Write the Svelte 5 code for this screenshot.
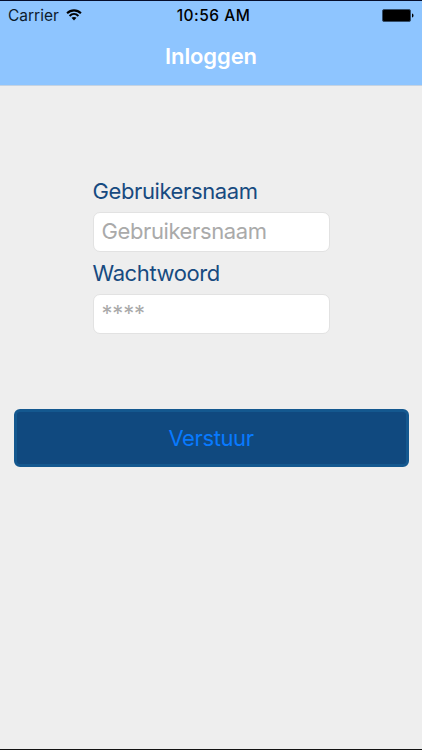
<script lang="ts">
  let username = $state('');
  let password = $state('');

  function submit(e: SubmitEvent) {
    e.preventDefault();
  }
</script>

<div class="screen">
  <header>
    <div class="status">
      <div class="carrier">
        <span>Carrier</span>
        <svg class="wifi" width="16" height="12" viewBox="0 0 17 13" aria-hidden="true">
          <g fill="none" stroke="#000" stroke-width="2.2">
            <path d="M1 4.7C5.3.4 11.7.4 16 4.7" />
            <path d="M3.7 7.5c2.8-2.7 6.8-2.7 9.6 0" />
          </g>
          <path d="M5.8 9.6c1.6-1.4 3.8-1.4 5.4 0L8.5 12.4z" />
        </svg>
      </div>
      <time>10:56 AM</time>
      <svg class="battery" width="32" height="13" viewBox="0 0 32 13" aria-hidden="true">
        <rect x=".5" y=".5" width="28" height="12" rx="1.5" stroke="#344d68" />
        <path d="M30 4.5c2 .5 2 3.500 0 4z" />
      </svg>
    </div>
    <h1>Inloggen</h1>
  </header>

  <form onsubmit={submit}>
    <div class="fields">
      <label for="username">Gebruikersnaam</label>
      <input id="username" type="text" placeholder="Gebruikersnaam" bind:value={username} />
      <label class="pw" for="password">Wachtwoord</label>
      <input id="password" type="password" placeholder="****" bind:value={password} />
    </div>
    <button type="submit"><span>Verstuur</span></button>
  </form>
</div>

<style>
  :global(body) {
    margin: 0;
  }
  .screen {
    box-sizing: border-box;
    height: 750px;
    background: #eee;
    border-top: 1px solid #050e2c;
    border-bottom: 1px solid #111;
    font-family: Inter, 'Liberation Sans', sans-serif;
    overflow: hidden;
  }
  header {
    height: 85px;
    background: #8ec5ff;
    border-bottom: 1px solid #c5d3e2;
    box-sizing: border-box;
  }
  .status {
    display: grid;
    grid-template-columns: 1fr auto 1fr;
    align-items: center;
    height: 27px;
    padding: 0 8px 0 8px;
    color: #000;
    font-size: 15.5px;
    line-height: 27px;
  }
  .carrier {
    display: flex;
    align-items: center;
    gap: 7px;
    color: #0c1b2d;
  }
  .carrier span,
  time {
    padding-top: 2px;
    line-height: 26px;
  }
  time {
    padding-left: 5px;
    font-weight: 550;
    letter-spacing: 0.5px;
  }
  .battery {
    justify-self: end;
  }
  h1 {
    margin: 13px 0 0;
    color: #fff;
    font-size: 22px;
    font-weight: 580;
    letter-spacing: -0.1px;
    line-height: 30px;
    text-align: center;
  }
  form {
    padding: 90px 13px 0;
  }
  .fields {
    width: 237px;
    margin: 0 auto;
  }
  label {
    display: block;
    height: 36px;
    color: #174a80;
    font-size: 22px;
    letter-spacing: -0.4px;
    line-height: 30px;
  }
  .pw {
    margin-top: 6px;
  }
  input {
    display: block;
    box-sizing: border-box;
    width: 237px;
    height: 40px;
    padding: 0 8px 3px;
    border: 1px solid #e2e2e2;
    border-radius: 7px;
    background: #fff;
    font: inherit;
    font-size: 22px;
    letter-spacing: -0.4px;
    outline: 0;
  }
  input::placeholder {
    color: #aaa;
    opacity: 1;
  }
  #password {
    letter-spacing: -0.2px;
  }
  button {
    display: block;
    box-sizing: border-box;
    width: 395px;
    height: 58px;
    margin: 75px auto 0;
    padding: 0;
    border: 3px solid #14588f;
    border-radius: 6px;
    background: #10497f;
    color: #087aff;
    font: inherit;
    font-size: 22px;
    letter-spacing: -0.4px;
  }
</style>
